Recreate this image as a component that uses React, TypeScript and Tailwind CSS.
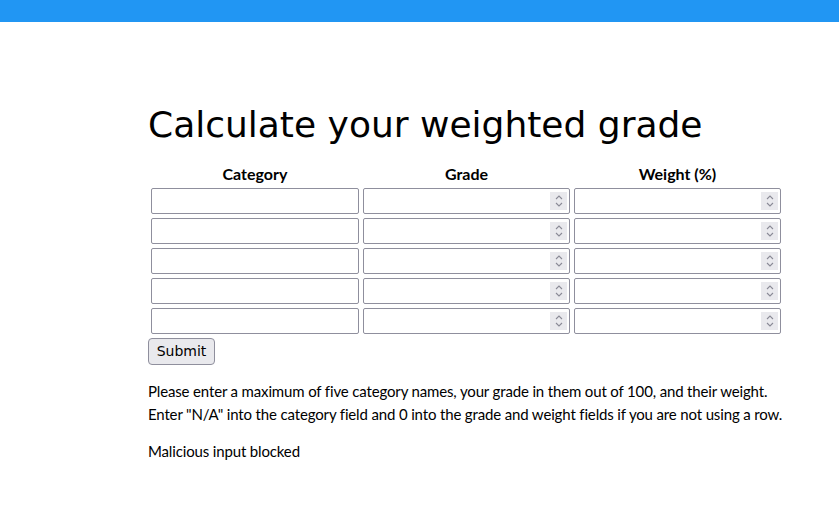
import React from "react";

const rows = [0, 1, 2, 3, 4];

const Spinner = () => (
  <span className="pointer-events-none absolute right-[4px] top-1/2 flex h-[18px] w-[17px] -translate-y-1/2 flex-col items-center justify-center gap-[2px] bg-[#e9e9ed]">
    <svg width="8" height="5" viewBox="0 0 8 5" fill="none">
      <path d="M1 4 L4 1 L7 4" stroke="#8a8a96" strokeWidth="1.1" />
    </svg>
    <svg width="8" height="5" viewBox="0 0 8 5" fill="none">
      <path d="M1 1 L4 4 L7 1" stroke="#8a8a96" strokeWidth="1.1" />
    </svg>
  </span>
);

const Field = ({ spin }: { spin?: boolean }) => (
  <div className="relative p-px">
    <input
      type="text"
      className="block h-[26px] w-full rounded-[2px] border border-[#8f8f9d] bg-white px-1 text-[13px] outline-none"
    />
    {spin && <Spinner />}
  </div>
);

export default function App() {
  return (
    <div className="min-h-[522px] bg-white text-black font-['Lato',sans-serif]">
      <div className="h-[22px] bg-[#2196f3]" />
      <div className="ml-[148px] pt-[83px]">
        <h1 className="font-['DejaVu_Sans',sans-serif] text-[36px] font-normal leading-[40px]">
          Calculate your weighted grade
        </h1>
        <div className="mt-[16px] grid w-fit grid-cols-[210px_209px_209px] gap-[2px] p-[2px]">
          <div className="text-center text-[16px] font-bold leading-[22px]">Category</div>
          <div className="text-center text-[16px] font-bold leading-[22px]">Grade</div>
          <div className="text-center text-[16px] font-bold leading-[22px]">Weight (%)</div>
          {rows.map((r) => (
            <React.Fragment key={r}>
              <Field />
              <Field spin />
              <Field spin />
            </React.Fragment>
          ))}
        </div>
        <button className="mt-px h-[27px] w-[67px] rounded-[4px] border border-[#8f8f9d] bg-[#e9e9ed] font-['DejaVu_Sans',sans-serif] text-[14px] font-normal text-black">
          Submit
        </button>
        <p className="mt-[15px] whitespace-nowrap text-[15px] leading-[23px] tracking-[-0.15px]">
          Please enter a maximum of five category names, your grade in them out of 100, and their weight.
          <br />
          Enter "N/A" into the category field and 0 into the grade and weight fields if you are not using a row.
        </p>
        <p className="mt-[14px] text-[15px] leading-[23px] tracking-[-0.15px]">Malicious input blocked</p>
      </div>
    </div>
  );
}
